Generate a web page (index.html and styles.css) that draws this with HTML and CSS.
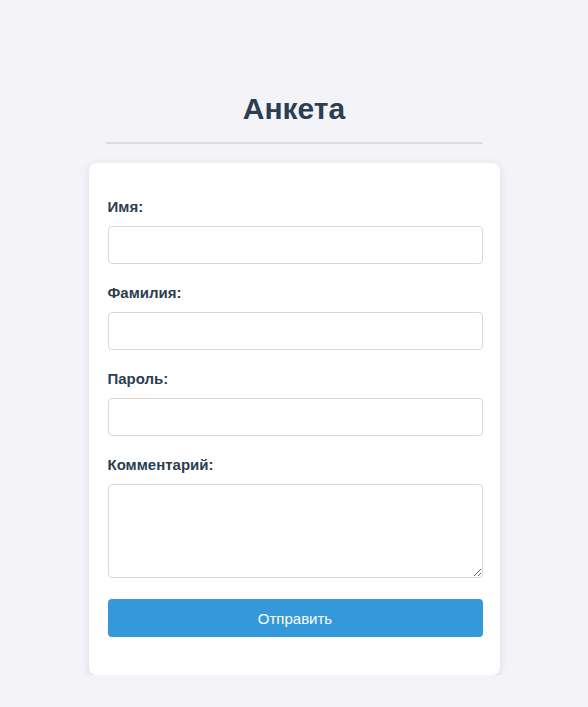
FILE: index.html
```html
<!DOCTYPE html>
<html lang="ru">
<head>
<meta charset="utf-8">
<title>Анкета</title>
<link rel="stylesheet" href="styles.css">
</head>
<body>
<div class="page">
  <h1 class="title">Анкета</h1>
  <form class="card">
    <div class="field">
      <label class="label" for="name">Имя:</label>
      <input class="input" id="name" type="text">
    </div>
    <div class="field">
      <label class="label" for="surname">Фамилия:</label>
      <input class="input" id="surname" type="text">
    </div>
    <div class="field">
      <label class="label" for="pass">Пароль:</label>
      <input class="input" id="pass" type="password">
    </div>
    <div class="field">
      <label class="label" for="comment">Комментарий:</label>
      <textarea class="input textarea" id="comment"></textarea>
    </div>
    <button class="submit" type="button">Отправить</button>
  </form>
</div>
</body>
</html>
```

FILE: styles.css
```css
html, body {
  margin: 0;
  padding: 0;
}
body {
  background: #f4f4f8;
  font-family: "Liberation Sans", Arial, sans-serif;
  color: #2c3e50;
}
.page {
  width: 411px;
  margin: 0 auto;
  padding-top: 91px;
  display: flex;
  flex-direction: column;
  align-items: center;
}
.title {
  width: 377px;
  margin: 0 0 19px 0;
  padding-bottom: 15px;
  border-bottom: 2px solid #dcdde3;
  text-align: center;
  font-size: 30px;
  line-height: 36px;
  font-weight: bold;
  color: #2c3e50;
}
.card {
  box-sizing: border-box;
  width: 411px;
  background: #fff;
  border-radius: 8px;
  box-shadow: 0 2px 10px rgba(0, 0, 0, 0.1);
  padding: 35px 17px 38px 19px;
  display: flex;
  flex-direction: column;
}
.field {
  display: flex;
  flex-direction: column;
  margin-bottom: 20px;
}
.label {
  font-size: 15px;
  line-height: 17px;
  font-weight: bold;
  color: #2c3e50;
  margin-bottom: 11px;
}
.input {
  box-sizing: border-box;
  width: 375px;
  height: 38px;
  border: 1px solid #d9d9d9;
  border-radius: 4px;
  background: #fff;
  margin: 0;
  padding: 8px 10px;
  font-family: "Liberation Sans", Arial, sans-serif;
  font-size: 15px;
}
.textarea {
  height: 94px;
  resize: vertical;
}
.field:nth-child(4) {
  margin-bottom: 21px;
}
.submit {
  width: 375px;
  height: 38px;
  border: none;
  border-radius: 4px;
  background: #3498db;
  color: #fff;
  font-family: "Liberation Sans", Arial, sans-serif;
  font-size: 15px;
  cursor: pointer;
}
```
